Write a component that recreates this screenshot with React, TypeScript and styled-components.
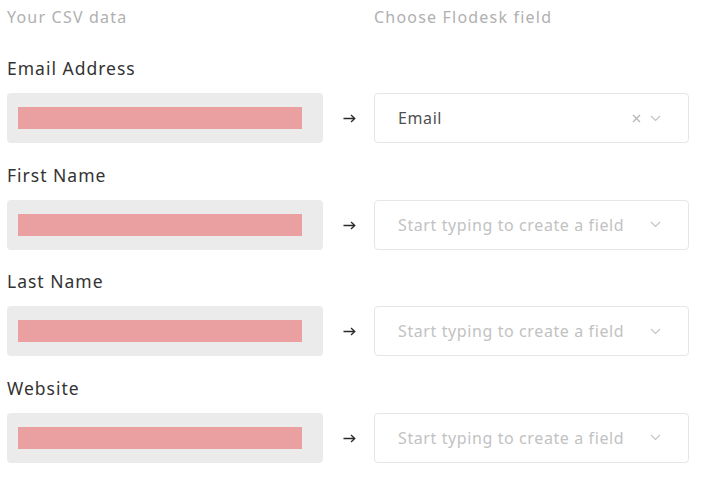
import styled, { createGlobalStyle } from 'styled-components'

const GlobalStyle = createGlobalStyle`
  html, body {
    margin: 0;
    background: #ffffff;
  }
  body {
    font-family: 'Noto Sans', 'Open Sans', sans-serif;
  }
`

const rows = [
  { label: 'Email Address', value: 'Email' },
  { label: 'First Name', value: '' },
  { label: 'Last Name', value: '' },
  { label: 'Website', value: '' },
]

const App = () => {
  return (
    <Page>
      <GlobalStyle />
      <Header>
        <HeadCell>Your CSV data</HeadCell>
        <span />
        <HeadCell>Choose Flodesk field</HeadCell>
      </Header>
      {rows.map((r) => (
        <Row key={r.label}>
          <Label>{r.label}</Label>
          <Mapping>
            <CsvBox>
              <Redacted />
            </CsvBox>
            <Arrow>
              <svg width='13' height='9' viewBox='0 0 13 9'>
                <path
                  d='M0.5 4.5 H11.5 M8 1 L11.8 4.5 L8 8'
                  fill='none'
                  stroke='#2a2a2a'
                  strokeWidth='1.3'
                />
              </svg>
            </Arrow>
            <Select>
              <SelectText $empty={!r.value}>
                {r.value || 'Start typing to create a field'}
              </SelectText>
              <Icons>
                {r.value && (
                  <svg width='9' height='9' viewBox='0 0 9 9'>
                    <path d='M1 1 L8 8 M8 1 L1 8' stroke='#b9b9b9' strokeWidth='1.4' />
                  </svg>
                )}
                <svg width='11' height='7' viewBox='0 0 11 7'>
                  <path d='M1 1 L5.5 5.5 L10 1' fill='none' stroke='#c4c4c4' strokeWidth='1.2' />
                </svg>
              </Icons>
            </Select>
          </Mapping>
        </Row>
      ))}
    </Page>
  )
}

export default App

const Page = styled.div`
  padding: 6px 23px 0 7px;
`

const Header = styled.div`
  display: grid;
  grid-template-columns: 316px 51px 315px;
  line-height: 22px;
  margin-bottom: 29px;
`

const HeadCell = styled.div`
  font-size: 16px;
  letter-spacing: 1.2px;
  color: #b0b0b0;
`

const Row = styled.div`
  margin-bottom: 20.5px;
`

const Label = styled.div`
  font-size: 17.5px;
  letter-spacing: 1px;
  line-height: 22px;
  color: #333;
  margin-bottom: 14px;
`

const Mapping = styled.div`
  display: grid;
  grid-template-columns: 316px 51px 315px;
  align-items: center;
  height: 50px;
`

const CsvBox = styled.div`
  height: 50px;
  box-sizing: border-box;
  background: #ebebeb;
  border-radius: 4px;
  padding: 0 21px 0 11px;
  display: flex;
  align-items: center;
`

const Redacted = styled.div`
  flex: 1;
  height: 22px;
  background: #eaa0a0;
`

const Arrow = styled.div`
  display: flex;
  justify-content: center;
  align-items: center;
  padding: 1px 0 0 1px;
`

const Select = styled.div`
  height: 50px;
  box-sizing: border-box;
  border: 1px solid #e6e6e6;
  border-radius: 4px;
  background: #fff;
  display: flex;
  align-items: center;
  padding: 0 27px 0 23px;
`

const SelectText = styled.div<{ $empty: boolean }>`
  flex: 1;
  font-size: 16px;
  letter-spacing: 0.6px;
  color: ${(p) => (p.$empty ? '#c2c2c2' : '#505050')};
`

const Icons = styled.div`
  display: flex;
  align-items: center;
  gap: 9px;
`
